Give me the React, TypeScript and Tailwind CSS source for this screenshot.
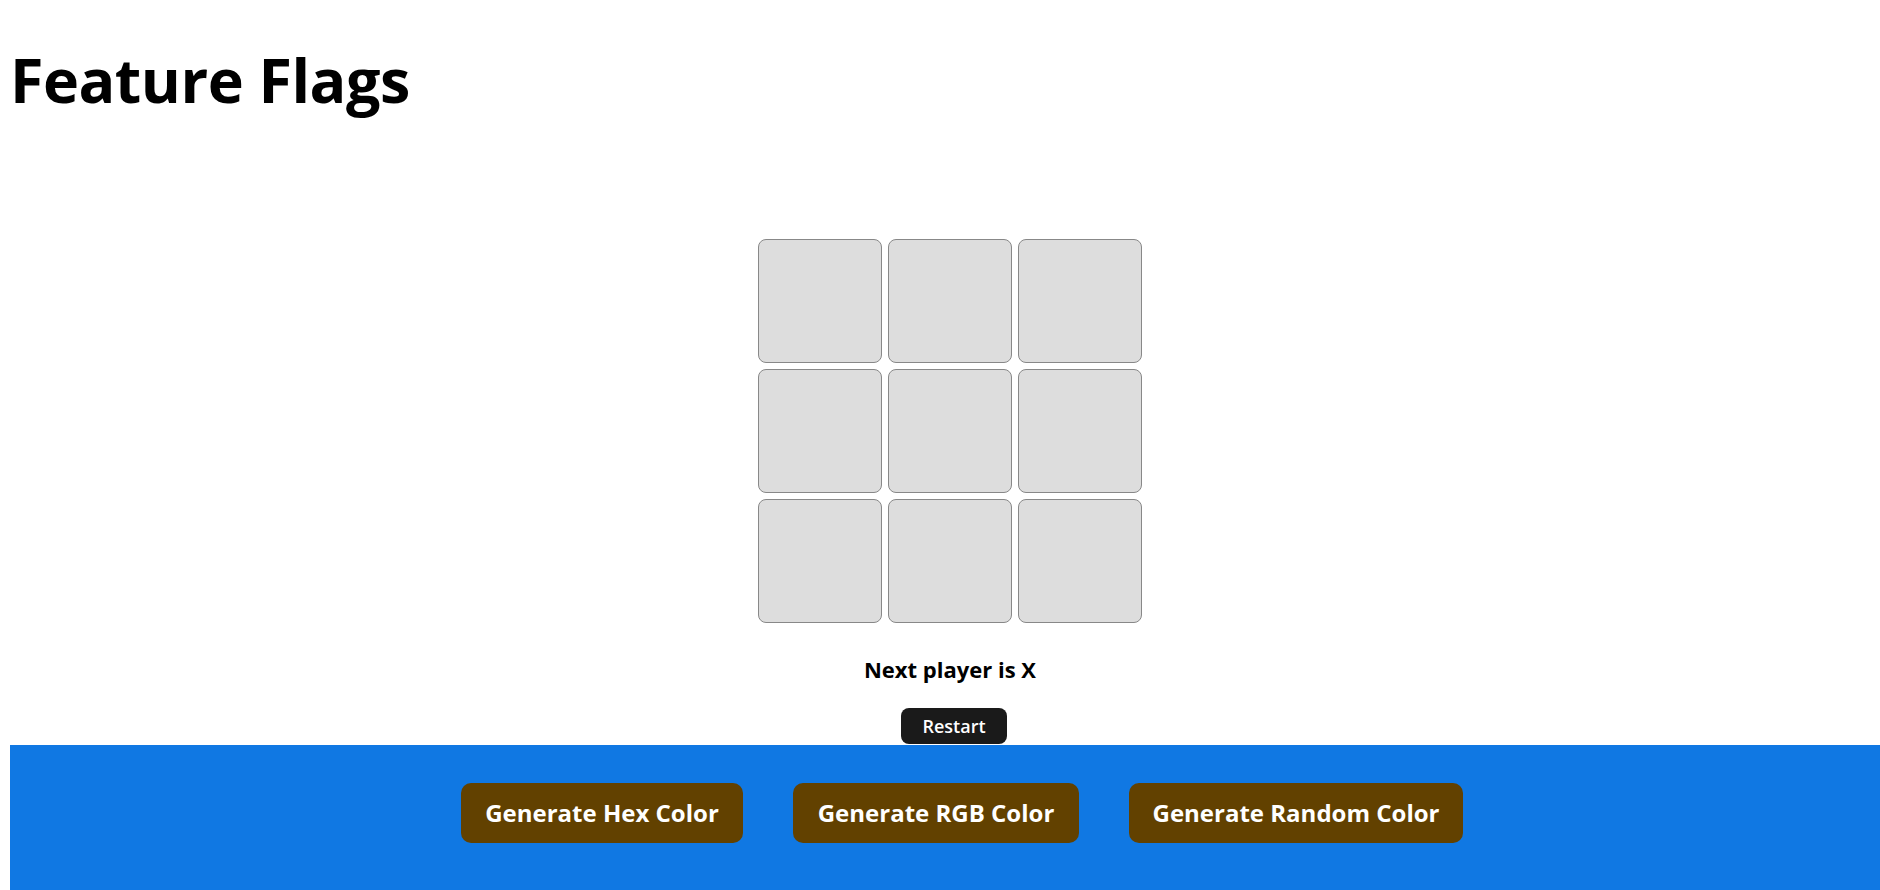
const cells = Array.from({ length: 9 }, (_, i) => i);

export default function App() {
  return (
    <div
      className="h-[890px] w-[1880px] overflow-hidden bg-white text-black"
      style={{ fontFamily: '"Open Sans", "Noto Sans", sans-serif' }}
    >
      <div className="pl-[10px]">
        <h1 className="pt-[49px] text-[61px] font-bold leading-none tracking-[-0.5px]">Feature Flags</h1>

        <main className="flex w-[1880px] flex-col items-center pt-[129px]">
          <div className="grid grid-cols-[repeat(3,124px)] gap-[6px]">
            {cells.map((c) => (
              <button
                key={c}
                className="h-[124px] w-[124px] rounded-[8px] border border-[#888888] bg-[#dddddd]"
              />
            ))}
          </div>
          <p className="mt-[31px] text-[22px] font-bold leading-[30px]">Next player is X</p>
          <button className="ml-[8px] mt-[24px] h-[36px] w-[106px] rounded-[8px] bg-[#1a1a1a] text-[18px] font-semibold text-white">
            Restart
          </button>
        </main>

        <section className="mt-[1px] flex h-[145px] w-[1880px] items-start gap-[50px] bg-[#1078e3] pl-[451px] pt-[38px]">
          <button className="h-[60px] w-[282px] rounded-[10px] bg-[#624100] text-[24px] font-bold text-white">
            Generate Hex Color
          </button>
          <button className="h-[60px] w-[286px] rounded-[10px] bg-[#624100] text-[24px] font-bold text-white">
            Generate RGB Color
          </button>
          <button className="h-[60px] w-[334px] rounded-[10px] bg-[#624100] text-[24px] font-bold text-white">
            Generate Random Color
          </button>
        </section>
      </div>
    </div>
  );
}
